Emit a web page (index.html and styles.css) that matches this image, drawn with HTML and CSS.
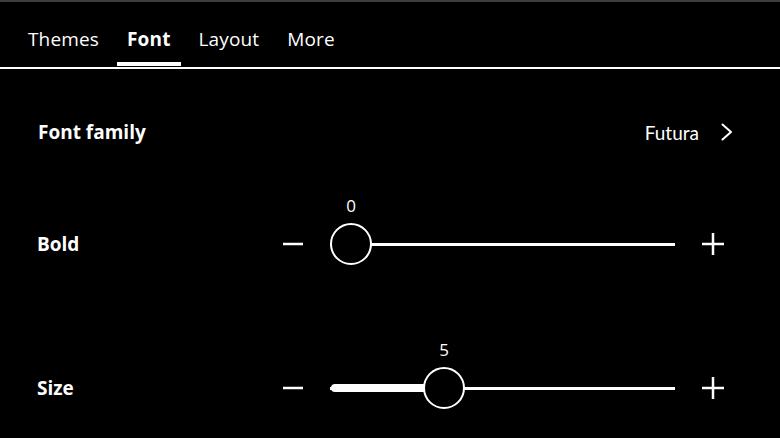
FILE: index.html
```html
<!DOCTYPE html>
<html lang="en">
<head>
<meta charset="utf-8">
<title>Reading settings</title>
<link rel="stylesheet" href="styles.css">
</head>
<body>
<div class="app">
  <nav class="tabs">
    <div class="tab">Themes</div>
    <div class="tab active">Font</div>
    <div class="tab">Layout</div>
    <div class="tab">More</div>
  </nav>
  <main class="settings">
    <div class="row-family">
      <span class="label">Font family</span>
      <button class="picker">
        <span class="picker-value">Futura</span>
        <svg class="chevron" width="12" height="18" viewBox="0 0 12 18"><path d="M1.5 1.5 L10 9 L1.5 16.5" fill="none" stroke="#fff" stroke-width="2" stroke-linecap="round" stroke-linejoin="round"/></svg>
      </button>
    </div>
    <div class="slider-row">
      <span class="label">Bold</span>
      <button class="step"><svg width="20" height="20" viewBox="0 0 20 20"><line x1="0" y1="10" x2="20" y2="10" stroke="#fff" stroke-width="2.5"/></svg></button>
      <div class="slider">
        <div class="fill" style="width:0px"></div>
        <div class="thumb" style="left:0px"><span class="value">0</span></div>
      </div>
      <button class="step"><svg width="22" height="22" viewBox="0 0 22 22"><line x1="0" y1="11" x2="22" y2="11" stroke="#fff" stroke-width="2.5"/><line x1="11" y1="0" x2="11" y2="22" stroke="#fff" stroke-width="2.5"/></svg></button>
    </div>
    <div class="slider-row">
      <span class="label">Size</span>
      <button class="step"><svg width="20" height="20" viewBox="0 0 20 20"><line x1="0" y1="10" x2="20" y2="10" stroke="#fff" stroke-width="2.5"/></svg></button>
      <div class="slider">
        <div class="fill" style="width:100px"></div>
        <div class="thumb" style="left:93px"><span class="value">5</span></div>
      </div>
      <button class="step"><svg width="22" height="22" viewBox="0 0 22 22"><line x1="0" y1="11" x2="22" y2="11" stroke="#fff" stroke-width="2.5"/><line x1="11" y1="0" x2="11" y2="22" stroke="#fff" stroke-width="2.5"/></svg></button>
    </div>
  </main>
</div>
</body>
</html>
```
FILE: styles.css
```css
html, body {
  margin: 0;
  padding: 0;
  background: #000;
}
body {
  width: 780px;
  height: 438px;
  overflow: hidden;
  color: #fff;
  font-family: "Open Sans", "Noto Sans", sans-serif;
}
.app {
  border-top: 2px solid #3c3c3c;
}
.tabs {
  display: flex;
  gap: 8px;
  height: 64px;
  padding: 0 18px 1px;
  border-bottom: 2px solid #fff;
}
.tab {
  box-sizing: border-box;
  height: 64px;
  padding: 23px 10px 0;
  border-bottom: 4px solid transparent;
  font-size: 19px;
  line-height: 28px;
  letter-spacing: 0.15px;
  color: #fff;
}
.tab.active {
  font-weight: 700;
  border-bottom-color: #fff;
}
.settings {
  padding: 31px 47px 0 37px;
}
.label {
  font-size: 19px;
  font-weight: 700;
}
.row-family {
  display: flex;
  align-items: center;
  justify-content: space-between;
  height: 64px;
  padding-left: 1px;
}
.picker {
  display: flex;
  align-items: center;
  gap: 22px;
  background: none;
  border: 0;
  padding: 0;
  color: #fff;
  font: inherit;
}
.picker-value {
  font-family: "Lato", "Open Sans", sans-serif;
  font-size: 19px;
}
.chevron {
  display: block;
}
.slider-row {
  display: flex;
  align-items: center;
  box-sizing: border-box;
  height: 144px;
  padding-top: 16px;
}
.slider-row .label {
  width: 246px;
  flex: none;
}
.step {
  background: none;
  border: 0;
  padding: 0;
  flex: none;
}
.step svg {
  display: block;
}
.slider {
  position: relative;
  flex: none;
  width: 345px;
  height: 44px;
  margin: 0 27px;
}
.slider::before {
  content: "";
  position: absolute;
  left: 0;
  right: 0;
  top: 21px;
  height: 3px;
  background: #fff;
}
.fill {
  position: absolute;
  left: 1px;
  top: 18px;
  height: 8px;
  border-radius: 4px;
  background: #fff;
}
.thumb {
  position: absolute;
  top: 1px;
  width: 42px;
  height: 42px;
  box-sizing: border-box;
  border: 2px solid #fff;
  border-radius: 50%;
  background: #000;
}
.value {
  position: absolute;
  bottom: 100%;
  left: 50%;
  transform: translateX(-50%);
  margin-bottom: 9px;
  font-size: 17px;
  line-height: 20px;
}
```
